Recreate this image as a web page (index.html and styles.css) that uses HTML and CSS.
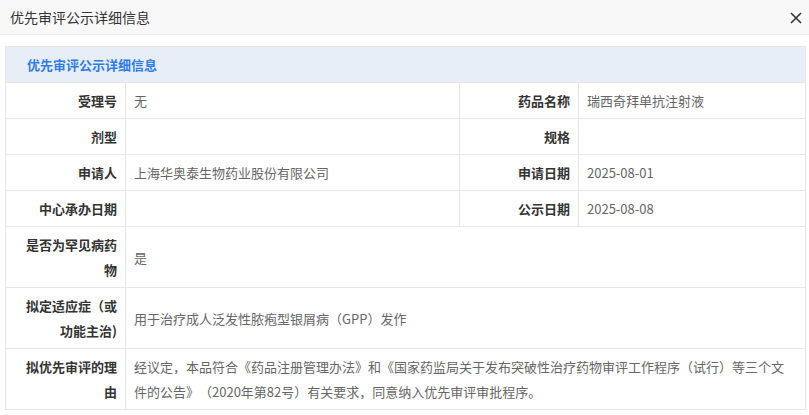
FILE: index.html
```html
<!DOCTYPE html>
<html lang="zh-CN">
<head>
    <meta charset="UTF-8">
    <meta name="viewport" content="width=device-width, initial-scale=1.0">
    <title>优先审评公示详细信息</title>
    <link rel="stylesheet" href="styles.css">
</head>
<body>

<div class="dialog-bar">
    <span class="dialog-title">优先审评公示详细信息</span>
    <svg class="dialog-close" width="12" height="12" viewBox="0 0 12 12">
        <path d="M1 1 L11 11 M11 1 L1 11" stroke="#333" stroke-width="1.6" fill="none"/>
    </svg>
</div>

<div class="content">
    <div class="panel-head">优先审评公示详细信息</div>
    <table class="detail">
        <colgroup>
            <col class="col-label1">
            <col class="col-value1">
            <col class="col-label2">
            <col>
        </colgroup>
        <tr>
            <th>受理号</th>
            <td>无</td>
            <th>药品名称</th>
            <td>瑞西奇拜单抗注射液</td>
        </tr>
        <tr>
            <th>剂型</th>
            <td></td>
            <th>规格</th>
            <td></td>
        </tr>
        <tr>
            <th>申请人</th>
            <td>上海华奥泰生物药业股份有限公司</td>
            <th>申请日期</th>
            <td>2025-08-01</td>
        </tr>
        <tr>
            <th>中心承办日期</th>
            <td></td>
            <th>公示日期</th>
            <td>2025-08-08</td>
        </tr>
        <tr>
            <th>是否为罕见病药物</th>
            <td colspan="3">是</td>
        </tr>
        <tr>
            <th>拟定适应症（或功能主治)</th>
            <td colspan="3">用于治疗成人泛发性脓疱型银屑病（GPP）发作</td>
        </tr>
        <tr>
            <th>拟优先审评的理由</th>
            <td colspan="3">经议定，本品符合《药品注册管理办法》和《国家药监局关于发布突破性治疗药物审评工作程序（试行）等三个文件的公告》（2020年第82号）有关要求，同意纳入优先审评审批程序。</td>
        </tr>
    </table>
</div>

</body>
</html>
```

FILE: styles.css
```css
body {
    margin: 0;
    background: #fff;
    font-family: "Noto Sans CJK SC", "Microsoft YaHei", sans-serif;
    color: #333;
    text-spacing-trim: space-all;
}
.dialog-bar {
    height: 34px;
    background: #f8f8f8;
    border-bottom: 1px solid #eee;
    display: flex;
    align-items: center;
    justify-content: space-between;
    padding: 0 7px 0 10px;
}
.dialog-title {
    font-size: 14px;
    color: #333;
}
.dialog-close {
    margin-top: 2px;
}
.content {
    padding: 11px 3px 0 5px;
}
.panel-head {
    height: 35px;
    line-height: 35px;
    border: 1px solid #e6e6e6;
    border-bottom: none;
    background: #e8eef8;
    color: #2e7ce6;
    font-size: 13px;
    font-weight: bold;
    padding-left: 21px;
}
.detail {
    width: 100%;
    border-collapse: collapse;
    table-layout: fixed;
    font-size: 13px;
    line-height: 25px;
}
.col-label1 {
    width: 120px;
}
.col-value1 {
    width: 334px;
}
.col-label2 {
    width: 119px;
}
.detail th,
.detail td {
    border: 1px solid #e6e6e6;
    padding: 5px 8px;
    vertical-align: middle;
}
.detail th {
    text-align: right;
    font-weight: bold;
    color: #333;
}
.detail td {
    text-align: left;
    color: #666;
    padding-right: 10px;
}
```
